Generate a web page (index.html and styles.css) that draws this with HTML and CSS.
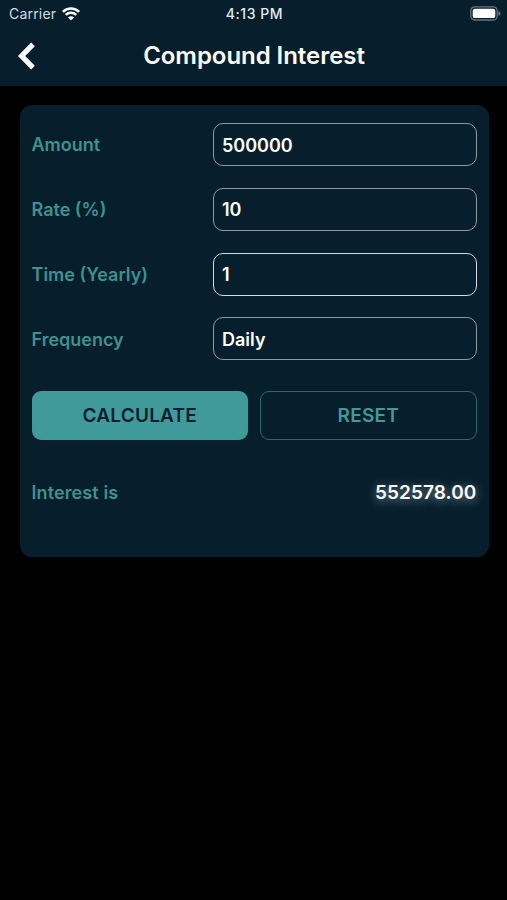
FILE: index.html
```html
<!DOCTYPE html>
<html lang="en">
<head>
    <meta charset="UTF-8">
    <meta name="viewport" content="width=device-width, initial-scale=1.0">
    <title>Compound Interest</title>
    <link rel="stylesheet" href="styles.css">
</head>
<body>
    <header>
        <!-- Status Bar -->
        <div class="status-bar">
            <div class="carrier">
                <span class="carrier-name">Carrier</span>
                <svg class="wifi-icon" width="18" height="14" viewBox="0 0 18 14">
                    <path d="M0.9 4.8 A11.5 11.5 0 0 1 17.1 4.8" fill="none" stroke="#fff" stroke-width="2.4"/>
                    <path d="M3.7 7.9 A7.6 7.6 0 0 1 14.3 7.9" fill="none" stroke="#fff" stroke-width="2.3"/>
                    <path d="M9 13.6 L6 10.6 A4.4 4.4 0 0 1 12 10.6 Z" fill="#fff"/>
                </svg>
            </div>
            <span class="clock">4:13 PM</span>
            <svg class="battery-icon" width="31" height="15" viewBox="0 0 31 15">
                <rect x="0.8" y="0.8" width="26.4" height="13.2" rx="4" fill="none" stroke="#64747e" stroke-width="1.3"/>
                <rect x="2.7" y="2.7" width="22.6" height="9.4" rx="2.2" fill="#fff"/>
                <path d="M28.4 5 Q30.6 5.8 30.6 7.4 Q30.6 9 28.4 9.8 Z" fill="#64747e"/>
            </svg>
        </div>

        <!-- Title Bar -->
        <div class="navbar">
            <a class="back-link" id="back-link">
                <svg width="20" height="30" viewBox="0 0 20 30">
                    <path d="M16 3.4 L4.6 15 L16 26.6" fill="none" stroke="#fff" stroke-width="5.2"/>
                </svg>
            </a>
            <h1>Compound Interest</h1>
        </div>
    </header>

    <form class="card">
        <div class="field">
            <label for="amount">Amount</label>
            <input type="text" id="amount" value="500000">
        </div>
        <div class="field">
            <label for="rate">Rate (%)</label>
            <input type="text" id="rate" value="10">
        </div>
        <div class="field">
            <label for="time">Time (Yearly)</label>
            <input type="text" id="time" class="active" value="1">
        </div>
        <div class="field">
            <label for="frequency">Frequency</label>
            <input type="text" id="frequency" value="Daily" readonly>
        </div>

        <div class="buttons">
            <button type="button" class="calculate-btn">CALCULATE</button>
            <button type="reset" class="reset-btn">RESET</button>
        </div>

        <div class="result">
            <span class="result-label">Interest is</span>
            <span class="result-value">552578.00</span>
        </div>
    </form>
</body>
</html>
```
FILE: styles.css
```css
* {
    box-sizing: border-box;
}

body {
    margin: 0;
    min-height: 100vh;
    font-family: Inter, 'Liberation Sans', sans-serif;
    background-color: #000;
    color: #fff;
}

header {
    height: 86px;
    background-color: #071f2d;
}

.status-bar {
    display: grid;
    grid-template-columns: 1fr auto 1fr;
    align-items: center;
    height: 27px;
    padding: 0 6px 0 9px;
    font-size: 14px;
}

.carrier {
    display: flex;
    align-items: center;
    gap: 6px;
}

.carrier-name {
    color: #d5dde2;
    letter-spacing: 0.2px;
}

.clock {
    margin-right: 1px;
    color: #e4eaee;
    font-weight: 500;
    letter-spacing: 0.55px;
}

.battery-icon {
    justify-self: end;
}

.navbar {
    display: grid;
    grid-template-columns: 60px 1fr 60px;
    align-items: center;
    height: 58px;
}

.back-link {
    display: flex;
    padding-left: 17px;
    cursor: pointer;
}

h1 {
    margin: -1px -10px 0 -9px;
    font-size: 24px;
    font-weight: 600;
    letter-spacing: -0.05px;
    text-align: center;
}

.card {
    display: flex;
    flex-direction: column;
    gap: 21.8px;
    height: 451.5px;
    margin: 19px 18.5px 0 19.5px;
    padding: 18px 12px;
    border-radius: 12px;
    background-color: #071f2d;
}

.field {
    display: grid;
    grid-template-columns: 1fr 264px;
    align-items: center;
}

.field label,
.result-label {
    color: #3d9290;
    font-size: 18px;
    font-weight: 600;
}

.field label {
    padding-top: 0.5px;
}

.result-label {
    padding-top: 1px;
    letter-spacing: 0.1px;
}

.field input {
    width: 100%;
    height: 43px;
    padding: 1px 8.5px 0;
    border: 1.3px solid #8b9aa2;
    border-radius: 10px;
    outline: none;
    background: transparent;
    color: #fff;
    font-family: inherit;
    font-size: 18px;
    font-weight: 600;
}

.field input.active {
    border-color: #d5dcdf;
}

.buttons {
    display: grid;
    grid-template-columns: 1fr 1fr;
    gap: 12px;
    margin-top: 8.6px;
}

.buttons button {
    height: 49px;
    border-radius: 9px;
    font-family: inherit;
    font-size: 19px;
    font-weight: 600;
    letter-spacing: 0.2px;
    cursor: pointer;
}

.calculate-btn {
    border: none;
    background-color: #419a9a;
    color: #071f2d;
}

.reset-btn {
    border: 1px solid #2b6a6e;
    background: transparent;
    color: #419a98;
}

.result {
    display: flex;
    justify-content: space-between;
    align-items: center;
    margin-top: 19px;
}

.result-value {
    font-size: 19px;
    font-weight: 600;
    letter-spacing: 0.1px;
    text-shadow: 0 2px 10px rgba(255, 255, 255, 0.5);
}
```
